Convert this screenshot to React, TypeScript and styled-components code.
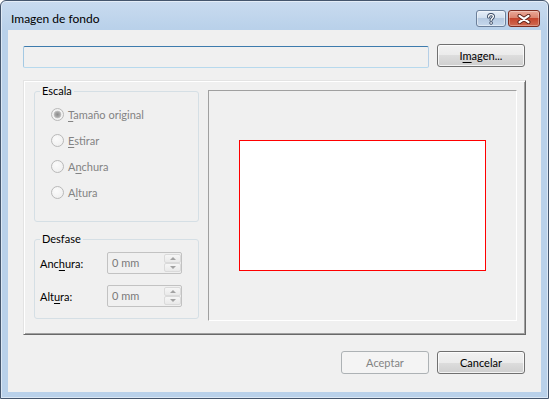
import styled, { createGlobalStyle } from "styled-components";

const GlobalStyle = createGlobalStyle`
  html, body {
    margin: 0;
    padding: 0;
    background: #ffffff;
  }
  body {
    font-family: Lato, "Segoe UI", "Liberation Sans", sans-serif;
    font-size: 11px;
    color: #000;
  }
  * {
    box-sizing: border-box;
  }
`;

const App = () => {
  return (
    <>
      <GlobalStyle />
      <Window>
        <TitleBar>
          <Title>Imagen de fondo</Title>
          <CaptionButtons>
            <HelpButton>
              <svg width="10" height="12" viewBox="0 0 10 12">
                <path d="M2.6 4 C2.6 2.3 3.6 1.6 5 1.6 C6.5 1.6 7.4 2.5 7.4 3.6 C7.4 5.1 5.1 5.3 5.1 7.2" fill="none" stroke="#3b4c66" strokeWidth="3.2" strokeLinecap="round" />
                <path d="M2.6 4 C2.6 2.3 3.6 1.6 5 1.6 C6.5 1.6 7.4 2.5 7.4 3.6 C7.4 5.1 5.1 5.3 5.1 7.2" fill="none" stroke="#ffffff" strokeWidth="1.4" strokeLinecap="round" />
                <circle cx="5.1" cy="10" r="1.4" fill="#ffffff" stroke="#3b4c66" strokeWidth="0.9" />
              </svg>
            </HelpButton>
            <CloseButton>
              <svg width="16" height="10" viewBox="0 0 16 10">
                <path d="M3.5 1.8 L12.5 8.2 M12.5 1.8 L3.5 8.2" stroke="#5a2118" strokeWidth="4" strokeLinecap="round" />
                <path d="M3.5 1.8 L12.5 8.2 M12.5 1.8 L3.5 8.2" stroke="#ffffff" strokeWidth="2.2" strokeLinecap="round" />
              </svg>
            </CloseButton>
          </CaptionButtons>
        </TitleBar>

        <Client>
          <PathRow>
            <PathField />
            <DialogButton>
              I<Key>m</Key>agen...
            </DialogButton>
          </PathRow>

          <Panel>
            <LeftColumn>
              <Group>
                <Legend>Escala</Legend>
                <RadioList>
                  <RadioRow>
                    <Radio $checked />
                    <RadioLabel><Key>T</Key>amaño original</RadioLabel>
                  </RadioRow>
                  <RadioRow>
                    <Radio />
                    <RadioLabel><Key>E</Key>stirar</RadioLabel>
                  </RadioRow>
                  <RadioRow>
                    <Radio />
                    <RadioLabel>A<Key>n</Key>chura</RadioLabel>
                  </RadioRow>
                  <RadioRow>
                    <Radio />
                    <RadioLabel>A<Key>l</Key>tura</RadioLabel>
                  </RadioRow>
                </RadioList>
              </Group>

              <OffsetGroup>
                <Legend>Desfase</Legend>
                <OffsetList>
                  <OffsetRow>
                    <OffsetLabel>Anc<Key>h</Key>ura:</OffsetLabel>
                    <Spin>
                      <SpinValue>0 mm</SpinValue>
                      <SpinButtons>
                        <SpinArrow><Arrow $up /></SpinArrow>
                        <SpinArrow><Arrow /></SpinArrow>
                      </SpinButtons>
                    </Spin>
                  </OffsetRow>
                  <OffsetRow>
                    <OffsetLabel>Alt<Key>u</Key>ra:</OffsetLabel>
                    <Spin>
                      <SpinValue>0 mm</SpinValue>
                      <SpinButtons>
                        <SpinArrow><Arrow $up /></SpinArrow>
                        <SpinArrow><Arrow /></SpinArrow>
                      </SpinButtons>
                    </Spin>
                  </OffsetRow>
                </OffsetList>
              </OffsetGroup>
            </LeftColumn>

            <Preview>
              <PageRect />
            </Preview>
          </Panel>

          <ButtonRow>
            <DialogButton disabled>Aceptar</DialogButton>
            <DialogButton>Cancelar</DialogButton>
          </ButtonRow>
        </Client>
      </Window>
    </>
  );
};
export default App;

const Window = styled.div`
  width: 549px;
  height: 399px;
  display: flex;
  flex-direction: column;
  padding: 0 7px 6px;
  border: 1px solid #45566d;
  border-radius: 6px 6px 0 0;
  background: linear-gradient(#c9dbef, #b9d1ea 28px);
  box-shadow: inset 0 0 0 1px rgba(255, 255, 255, 0.5);
`;

const TitleBar = styled.div`
  height: 29px;
  flex: none;
  display: flex;
  align-items: center;
  padding: 6px 1px 0 3px;
`;

const Title = styled.div`
  flex: 1;
  font-size: 12px;
  color: #000;
`;

const CaptionButtons = styled.div`
  display: flex;
  gap: 2px;
`;

const HelpButton = styled.div`
  width: 30px;
  height: 17px;
  display: flex;
  align-items: center;
  justify-content: center;
  border: 1px solid #6b7f9a;
  border-radius: 3px;
  background: linear-gradient(#e6eef8 0%, #d0deee 50%, #b6cae2 50%, #c6d8ec 100%);
  box-shadow: inset 0 0 0 1px rgba(255, 255, 255, 0.45);
`;

const CloseButton = styled(HelpButton)`
  width: 32px;
  border-color: #7c2c20;
  background: linear-gradient(#eaa999 0%, #d9806a 50%, #c5452d 50%, #d06b52 100%);
  box-shadow: inset 0 0 0 1px rgba(255, 255, 255, 0.3);
`;

const Client = styled.div`
  flex: 1;
  display: flex;
  flex-direction: column;
  padding: 14px 15px 0;
  background: #f0f0f0;
`;

const PathRow = styled.div`
  height: 24px;
  display: flex;
  align-items: flex-start;
  gap: 8px;
  padding-right: 1px;
`;

const PathField = styled.div`
  flex: 1;
  height: 22px;
  margin-top: 2px;
  border: 1px solid;
  border-color: #3d7bad #b5cfe7 #b7d9ed #a4c9e3;
  border-radius: 2px;
  background: #f0f0f0;
`;

const Key = styled.span`
  text-decoration: underline;
  text-decoration-thickness: 1px;
  text-underline-offset: 2px;
`;

const DialogButton = styled.button`
  width: 88px;
  height: 23px;
  padding: 0;
  font-family: inherit;
  font-size: 11px;
  color: #000;
  border: 1px solid #707070;
  border-radius: 3px;
  background: linear-gradient(#f2f2f2 0%, #ebebeb 50%, #dddddd 50%, #cfcfcf 100%);
  box-shadow: inset 0 0 0 1px rgba(255, 255, 255, 0.75);

  &:disabled {
    color: #838383;
    border-color: #adb2b5;
    background: #f4f4f4;
    box-shadow: none;
  }
`;

const Panel = styled.div`
  height: 255px;
  margin-top: 12px;
  display: flex;
  gap: 9px;
  padding: 3px 8px 13px 10px;
  border: 1px solid;
  border-color: #e3e3e3 #696969 #696969 #e3e3e3;
  box-shadow: inset 1px 1px 0 #ffffff, inset -1px -1px 0 #a0a0a0;
`;

const LeftColumn = styled.div`
  width: 165px;
  flex: none;
  display: flex;
  flex-direction: column;
`;

const Group = styled.fieldset`
  margin: 0;
  padding: 0;
  min-width: 0;
  border: 1px solid #d5dfe5;
  border-radius: 3px;
`;

const OffsetGroup = styled(Group)`
  margin-top: 10px;
`;

const Legend = styled.legend`
  margin-left: 5px;
  padding: 0 2px;
  line-height: 14px;
  font-size: 11px;
  color: #000;
`;

const RadioList = styled.div`
  display: flex;
  flex-direction: column;
  padding: 3px 0 16px 16px;
`;

const RadioRow = styled.div`
  height: 26px;
  display: flex;
  align-items: center;
  gap: 4px;
`;

const Radio = styled.span<{ $checked?: boolean }>`
  width: 13px;
  height: 13px;
  flex: none;
  border-radius: 50%;
  border: 1px solid #b9b9b9;
  background: ${(p) =>
    p.$checked
      ? "radial-gradient(circle, #8c8c8c 0, #a8a8a8 2.5px, #c8c8c8 3.6px, #f4f4f4 4.2px, #e8e8e8 100%)"
      : "radial-gradient(circle at 40% 35%, #fbfbfb 0, #ececec 100%)"};
`;

const RadioLabel = styled.span`
  color: #838383;
`;

const OffsetList = styled.div`
  display: flex;
  flex-direction: column;
  gap: 11px;
  padding: 6px 0 11px 5px;
`;

const OffsetRow = styled.div`
  height: 22px;
  display: flex;
  align-items: center;
`;

const OffsetLabel = styled.span`
  width: 67px;
  flex: none;
`;

const Spin = styled.div`
  width: 75px;
  height: 22px;
  display: flex;
  border: 1px solid #c2c2c2;
  border-radius: 2px;
  background: #f0f0f0;
`;

const SpinValue = styled.span`
  flex: 1;
  padding-left: 4px;
  line-height: 20px;
  color: #7a7a7a;
`;

const SpinButtons = styled.div`
  width: 17px;
  margin: 1px 0;
  display: flex;
  flex-direction: column;
`;

const SpinArrow = styled.div`
  flex: 1;
  display: flex;
  align-items: center;
  justify-content: center;
  border: 1px solid #dadada;
  border-radius: 2px;
  background: linear-gradient(#f6f6f6, #e9e9e9);
`;

const Arrow = styled.span<{ $up?: boolean }>`
  width: 0;
  height: 0;
  border-left: 3px solid transparent;
  border-right: 3px solid transparent;
  ${(p) => (p.$up ? "border-bottom: 3px solid #a2a2a2;" : "border-top: 3px solid #a2a2a2;")}
`;

const Preview = styled.div`
  flex: 1;
  margin-top: 6px;
  display: flex;
  align-items: center;
  justify-content: center;
  border: 1px solid;
  border-color: #a0a0a0 #ffffff #ffffff #a0a0a0;
`;

const PageRect = styled.div`
  width: 247px;
  height: 131px;
  border: 1px solid #ff0000;
  background: #ffffff;
`;

const ButtonRow = styled.div`
  display: flex;
  justify-content: flex-end;
  gap: 8px;
  margin-top: 16px;
  padding-right: 1px;
`;
